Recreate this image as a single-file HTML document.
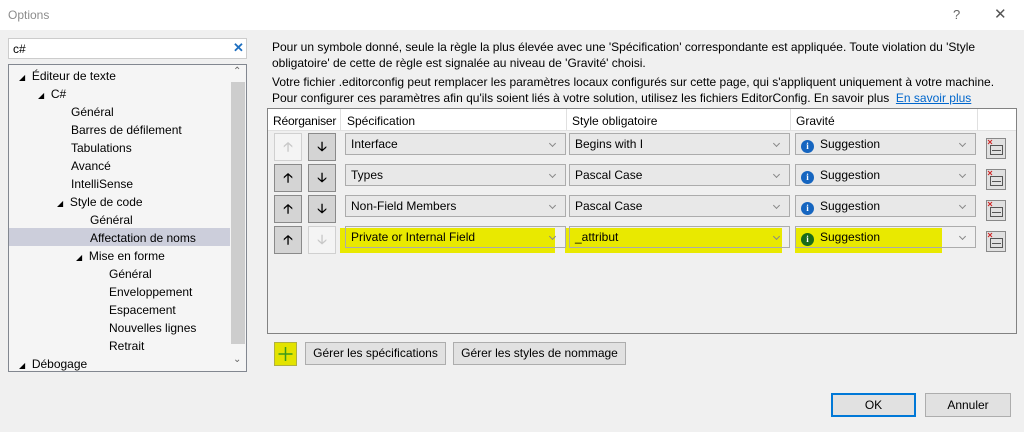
<!DOCTYPE html>
<html><head><meta charset="utf-8"><style>
*{box-sizing:border-box;margin:0;padding:0}
body{width:1024px;height:432px;background:#f0f0f0;font-family:"Liberation Sans",sans-serif;font-size:12px;color:#000;position:relative;overflow:hidden}
.a{position:absolute}
.t{position:absolute;white-space:nowrap}
.btn{position:absolute;background:#e1e1e1;border:1px solid #adadad;text-align:center}
.arrow{position:absolute;width:28px;height:28px;background:#d4d4d4;border:1px solid #8a8a8a;text-align:center;line-height:26px;font-size:13px;font-weight:bold}
.arrow.dis{background:#f4f4f4;border-color:#d0d0d0;color:#c8c8c8}
.combo{position:absolute;height:22px;background:#e8e8e8;border:1px solid #acacac;padding-left:5px;line-height:20px}
.combo:after{content:"";position:absolute;right:10px;top:7px;width:4px;height:4px;border-right:1px solid #888;border-bottom:1px solid #888;transform:rotate(45deg)}
.hl{position:absolute;background:#e9e900}
.info{display:inline-block;width:13px;height:13px;border-radius:50%;background:#1565c0;color:#fff;font-size:9px;font-weight:bold;text-align:center;line-height:13px;margin-right:6px;vertical-align:-1px;font-family:"Liberation Serif",serif}
.del{position:absolute;width:20px;height:21px;background:#e0e0e0;border:1px solid #888}
</style></head><body>
<div class="a" style="left:0;top:0;width:1024px;height:30px;background:#fff"></div>
<div class="t" style="left:8px;top:8px;color:#8c8c8c;font-size:12px">Options</div>
<div class="t" style="left:953px;top:7px;color:#666;font-size:13px">?</div>
<div class="t" style="left:994px;top:5px;color:#555;font-size:15px">✕</div>

<div class="a" style="left:8px;top:38px;width:239px;height:21px;background:#fff;border:1px solid #ccc"></div>
<div class="t" style="left:13px;top:42px">c#</div>
<div class="t" style="left:233px;top:40px;color:#1e6fc0;font-weight:bold;font-size:13px">✕</div>

<div class="a" style="left:8px;top:64px;width:239px;height:308px;background:#f5f5f5;border:1px solid #828790"></div>
<div class="a" style="left:231px;top:82px;width:14px;height:262px;background:#cdcdcd"></div>
<div class="t" style="left:233px;top:66px;color:#666;font-size:10px">⌃</div>
<div class="t" style="left:233px;top:354px;color:#666;font-size:10px">⌄</div>
<div class="a" style="left:9px;top:228px;width:221px;height:18px;background:#cccedb"></div>
<div style="position:absolute;left:0;top:67px;line-height:18px;font-size:12px">
<div class="t" style="left:19px;top:0"><span style="font-size:8px">◢</span>&nbsp; Éditeur de texte</div>
<div class="t" style="left:38px;top:18px"><span style="font-size:8px">◢</span>&nbsp; C#</div>
<div class="t" style="left:71px;top:36px">Général</div>
<div class="t" style="left:71px;top:54px">Barres de défilement</div>
<div class="t" style="left:71px;top:72px">Tabulations</div>
<div class="t" style="left:71px;top:90px">Avancé</div>
<div class="t" style="left:71px;top:108px">IntelliSense</div>
<div class="t" style="left:57px;top:126px"><span style="font-size:8px">◢</span>&nbsp; Style de code</div>
<div class="t" style="left:90px;top:144px">Général</div>
<div class="t" style="left:90px;top:162px">Affectation de noms</div>
<div class="t" style="left:76px;top:180px"><span style="font-size:8px">◢</span>&nbsp; Mise en forme</div>
<div class="t" style="left:109px;top:198px">Général</div>
<div class="t" style="left:109px;top:216px">Enveloppement</div>
<div class="t" style="left:109px;top:234px">Espacement</div>
<div class="t" style="left:109px;top:252px">Nouvelles lignes</div>
<div class="t" style="left:109px;top:270px">Retrait</div>
<div class="t" style="left:19px;top:288px"><span style="font-size:8px">◢</span>&nbsp; Débogage</div>
</div>

<div class="t" style="left:272px;top:39px;line-height:16px">Pour un symbole donné, seule la règle la plus élevée avec une 'Spécification' correspondante est appliquée. Toute violation du 'Style<br>obligatoire' de cette de règle est signalée au niveau de 'Gravité' choisi.</div>
<div class="t" style="left:272px;top:74px;line-height:16px">Votre fichier .editorconfig peut remplacer les paramètres locaux configurés sur cette page, qui s'appliquent uniquement à votre machine.<br>Pour configurer ces paramètres afin qu'ils soient liés à votre solution, utilisez les fichiers EditorConfig. En savoir plus &nbsp;<span style="color:#0066cc;text-decoration:underline">En savoir plus</span></div>

<div class="a" style="left:267px;top:108px;width:750px;height:226px;background:#f0f0f0;border:1px solid #828282"></div>
<div class="a" style="left:268px;top:109px;width:748px;height:22px;background:#fff;border-bottom:1px solid #e0e0e0"></div>
<div class="a" style="left:340px;top:109px;width:1px;height:22px;background:#e0e0e0"></div>
<div class="a" style="left:566px;top:109px;width:1px;height:22px;background:#e0e0e0"></div>
<div class="a" style="left:790px;top:109px;width:1px;height:22px;background:#e0e0e0"></div>
<div class="a" style="left:977px;top:109px;width:1px;height:22px;background:#e0e0e0"></div>
<div class="t" style="left:273px;top:114px;letter-spacing:-0.2px">Réorganiser</div>
<div class="t" style="left:347px;top:114px">Spécification</div>
<div class="t" style="left:572px;top:114px">Style obligatoire</div>
<div class="t" style="left:796px;top:114px">Gravité</div>

<div class="hl" style="left:340px;top:228px;width:215px;height:25px"></div>
<div class="hl" style="left:565px;top:228px;width:217px;height:25px"></div>
<div class="hl" style="left:795px;top:228px;width:147px;height:25px"></div>

<div class="arrow dis" style="left:274px;top:133px">🡡</div><div class="arrow" style="left:308px;top:133px">🡣</div>
<div class="arrow" style="left:274px;top:164px">🡡</div><div class="arrow" style="left:308px;top:164px">🡣</div>
<div class="arrow" style="left:274px;top:195px">🡡</div><div class="arrow" style="left:308px;top:195px">🡣</div>
<div class="arrow" style="left:274px;top:226px">🡡</div><div class="arrow dis" style="left:308px;top:226px">🡣</div>

<div class="combo" style="left:345px;top:133px;width:221px">Interface</div>
<div class="combo" style="left:569px;top:133px;width:221px">Begins with I</div>
<div class="combo" style="left:795px;top:133px;width:181px"><span class="info">i</span>Suggestion</div>
<div class="combo" style="left:345px;top:164px;width:221px">Types</div>
<div class="combo" style="left:569px;top:164px;width:221px">Pascal Case</div>
<div class="combo" style="left:795px;top:164px;width:181px"><span class="info">i</span>Suggestion</div>
<div class="combo" style="left:345px;top:195px;width:221px">Non-Field Members</div>
<div class="combo" style="left:569px;top:195px;width:221px">Pascal Case</div>
<div class="combo" style="left:795px;top:195px;width:181px"><span class="info">i</span>Suggestion</div>
<div class="combo" style="left:345px;top:226px;width:221px;background:transparent">Private or Internal Field</div>
<div class="combo" style="left:569px;top:226px;width:221px;background:transparent">_attribut</div>
<div class="combo" style="left:795px;top:226px;width:181px;background:transparent"><span class="info" style="background:#1a6b1a">i</span>Suggestion</div>

<div class="del" style="left:986px;top:138px"></div>
<div class="del" style="left:986px;top:169px"></div>
<div class="del" style="left:986px;top:200px"></div>
<div class="del" style="left:986px;top:231px"></div>
<svg class="a" style="left:986px;top:138px" width="20" height="124">
<g fill="none" stroke="#555"><rect x="4.5" y="7.5" width="12" height="9"/><line x1="6" y1="12.5" x2="15" y2="12.5"/>
<rect x="4.5" y="38.5" width="12" height="9"/><line x1="6" y1="43.5" x2="15" y2="43.5"/>
<rect x="4.5" y="69.5" width="12" height="9"/><line x1="6" y1="74.5" x2="15" y2="74.5"/>
<rect x="4.5" y="100.5" width="12" height="9"/><line x1="6" y1="105.5" x2="15" y2="105.5"/></g>
<g stroke="#d02020"><path d="M2 2l4 4M6 2l-4 4"/><path d="M2 33l4 4M6 33l-4 4"/><path d="M2 64l4 4M6 64l-4 4"/><path d="M2 95l4 4M6 95l-4 4"/></g>
</svg>

<div class="a" style="left:274px;top:342px;width:23px;height:24px;background:#e3e300;border:1px solid #b0b040"></div>
<svg class="a" style="left:274px;top:342px" width="23" height="24"><path d="M11.5 5v14M4.5 12h14" stroke="#3a9a1a" stroke-width="1.5"/></svg>
<div class="btn" style="left:305px;top:342px;width:141px;height:23px;line-height:21px">Gérer les spécifications</div>
<div class="btn" style="left:453px;top:342px;width:173px;height:23px;line-height:21px">Gérer les styles de nommage</div>

<div class="btn" style="left:831px;top:393px;width:85px;height:24px;line-height:20px;border:2px solid #0078d7">OK</div>
<div class="btn" style="left:925px;top:393px;width:86px;height:24px;line-height:22px">Annuler</div>
</body></html>
